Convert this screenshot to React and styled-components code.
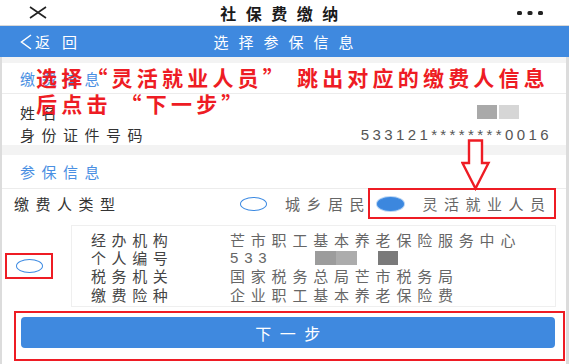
import React from "react";
import styled, { createGlobalStyle } from "styled-components";

const BLUE = "#3f89df";
const RED = "#ee1c24";

const GlobalStyle = createGlobalStyle`
  html, body {
    margin: 0;
    padding: 0;
    background: #fff;
  }
  body {
    font-family: "Liberation Sans", "Noto Sans CJK SC", sans-serif;
  }
  * {
    box-sizing: border-box;
  }
`;

const payer = {
  idNumber: "533121********0016",
};

const details = [
  { label: "经办机构", value: "芒市职工基本养老保险服务中心" },
  { label: "个人编号", value: "533", masked: true },
  { label: "税务机关", value: "国家税务总局芒市税务局" },
  { label: "缴费险种", value: "企业职工基本养老保险费" },
];

const App = () => (
  <Page>
    <GlobalStyle />
    <TopBar>
      <svg width="18" height="13" viewBox="0 0 18 13">
        <path d="M1 1 L17 12 M17 1 L1 12" stroke="#222" strokeWidth="1.6" fill="none" />
      </svg>
      <TopTitle>社保费缴纳</TopTitle>
      <svg width="26" height="4" viewBox="0 0 26 4">
        <rect x="0" y="0" width="5" height="4" rx="1.5" fill="#222" />
        <rect x="10.5" y="0" width="5" height="4" rx="1.5" fill="#222" />
        <rect x="21" y="0" width="5" height="4" rx="1.5" fill="#222" />
      </svg>
    </TopBar>
    <NavBar>
      <BackLink>
        <svg width="12" height="16" viewBox="0 0 12 16">
          <path d="M11 1 L1.5 8 L11 15" stroke="#fff" strokeWidth="1.5" fill="none" />
        </svg>
        返回
      </BackLink>
      <NavTitle>选择参保信息</NavTitle>
      <span />
    </NavBar>

    <Body>
      <Section>
        <SectionHeader>缴费信息</SectionHeader>
        <InfoRows>
          <InfoRow>
            <Label>姓名</Label>
            <Masked>
              <MaskBlock tone="#a9a9a9" />
              <MaskBlock tone="#d6d6d6" />
            </Masked>
          </InfoRow>
          <InfoRow>
            <Label>身份证件号码</Label>
            <Number>{payer.idNumber}</Number>
          </InfoRow>
        </InfoRows>
      </Section>

      <Section grow>
        <SectionHeader tall>参保信息</SectionHeader>
        <TypeRow>
          <Label>缴费人类型</Label>
          <Option>
            <Radio />
            <OptionText>城乡居民</OptionText>
          </Option>
          <Option highlighted>
            <Radio checked />
            <OptionText>灵活就业人员</OptionText>
          </Option>
        </TypeRow>

        <RecordRow>
          <RecordPick>
            <PickFrame>
              <Radio />
            </PickFrame>
          </RecordPick>
          <RecordCard>
            {details.map(item => (
              <RecordLine key={item.label}>
                <RecordLabel>{item.label}</RecordLabel>
                <RecordValue>
                  {item.value}
                  {item.masked && (
                    <>
                      <MaskBlock tone="#9c9c9c" wide offset={43} />
                      <MaskBlock tone="#acacac" wide />
                      <MaskBlock tone="#7a7a7a" offset={21} />
                    </>
                  )}
                </RecordValue>
              </RecordLine>
            ))}
          </RecordCard>
        </RecordRow>

        <ButtonFrame>
          <NextButton>下一步</NextButton>
        </ButtonFrame>
      </Section>
    </Body>

    <Note>
      <div>选择“灵活就业人员” 跳出对应的缴费人信息</div>
      <div>后点击 “下一步”</div>
    </Note>
    <Arrow width="30" height="52" viewBox="0 0 30 52">
      <path
        d="M8 1.5 L21 1.5 L21 24 L27.5 24 L14.5 49.5 L1.5 24 L8 24 Z"
        stroke={RED}
        strokeWidth="2.4"
        fill="#fff"
        strokeLinejoin="miter"
      />
    </Arrow>
  </Page>
);

const Page = styled.div`
  position: relative;
  width: 569px;
  height: 364px;
  overflow: hidden;
  display: flex;
  flex-direction: column;
  background: #f3f3f3;
`;

const TopBar = styled.div`
  height: 26px;
  flex-shrink: 0;
  display: flex;
  align-items: center;
  justify-content: space-between;
  padding: 0 26px 0 29px;
  background: #fff;
  border-bottom: 1px solid #d8d8d8;
`;

const TopTitle = styled.div`
  font-family: "Noto Sans CJK SC", sans-serif;
  font-size: 16px;
  font-weight: 700;
  letter-spacing: 9.5px;
  color: #1a1a1a;
  margin-left: 4px;
`;

const NavBar = styled.div`
  height: 31px;
  flex-shrink: 0;
  display: grid;
  grid-template-columns: 1fr auto 1fr;
  align-items: center;
  padding: 0 20px;
  background: ${BLUE};
  color: #fff;
`;

const BackLink = styled.div`
  display: flex;
  align-items: center;
  gap: 3px;
  font-family: "Noto Sans CJK SC", sans-serif;
  font-size: 15px;
  letter-spacing: 12px;
`;

const NavTitle = styled.div`
  font-family: "Noto Sans CJK SC", sans-serif;
  font-size: 15px;
  letter-spacing: 10px;
  margin-left: 8px;
`;

const Body = styled.div`
  flex: 1;
  display: flex;
  flex-direction: column;
  gap: 10px;
  padding-top: 6px;
  border-left: 2px solid #dcdcdc;
  border-right: 3px solid #dcdcdc;
`;

const Section = styled.div`
  background: #fff;
  display: flex;
  flex-direction: column;
  flex: ${props => (props.grow ? 1 : "none")};
`;

const SectionHeader = styled.div`
  height: ${props => (props.tall ? "34px" : "31px")};
  display: flex;
  align-items: center;
  padding-left: 18px;
  border-bottom: 1px solid #ececec;
  font-family: "Noto Sans CJK SC", sans-serif;
  font-size: 15px;
  letter-spacing: 6.5px;
  color: #4a8fe2;
`;

const InfoRows = styled.div`
  padding: 7px 0 0 18px;
`;

const InfoRow = styled.div`
  height: 22px;
  display: flex;
  align-items: center;
  justify-content: space-between;
  padding-right: 17px;
`;

const Label = styled.div`
  font-family: "Noto Sans CJK SC", sans-serif;
  font-size: 15px;
  letter-spacing: 6.5px;
  color: #333;
  flex: 1;
`;

const Masked = styled.div`
  display: flex;
  gap: 2px;
  margin-right: 30px;
`;

const MaskBlock = styled.span`
  display: inline-block;
  vertical-align: middle;
  width: ${props => (props.wide ? "21px" : "20px")};
  height: 14px;
  margin-left: ${props => (props.offset ? `${props.offset}px` : "0")};
  background: ${props => props.tone};
`;

const Number = styled.div`
  font-size: 15px;
  letter-spacing: 3.4px;
  color: #555;
  margin-right: -3px;
`;

const TypeRow = styled.div`
  height: 31px;
  margin-top: -1px;
  display: flex;
  align-items: center;
  padding: 0 10px 0 12px;
`;

const Option = styled.div`
  height: 31px;
  display: flex;
  align-items: center;
  gap: 18px;
  padding: ${props => (props.highlighted ? "0 9px 0 7px" : "0 4px 0 0")};
  border: ${props => (props.highlighted ? `2px solid ${RED}` : "none")};
`;

const OptionText = styled.span`
  font-family: "Noto Sans CJK SC", sans-serif;
  font-size: 15px;
  letter-spacing: 6.5px;
  margin-right: -6.5px;
  color: #666;
`;

const Radio = styled.span`
  display: inline-block;
  width: 27px;
  height: 14px;
  border-radius: 50%;
  border: 1.5px solid #3c8ae2;
  background: ${props => (props.checked ? "#3c87de" : "transparent")};
  box-shadow: ${props => (props.checked ? "0 0 0 1px #b9d4f3" : "none")};
`;

const RecordRow = styled.div`
  display: flex;
  align-items: center;
  margin-top: 6px;
  padding-right: 10px;
`;

const RecordPick = styled.div`
  width: 69px;
  flex-shrink: 0;
  padding-left: 3px;
`;

const PickFrame = styled.div`
  width: 48px;
  height: 26px;
  display: flex;
  align-items: center;
  justify-content: center;
  border: 2.5px solid ${RED};
`;

const RecordCard = styled.div`
  flex: 1;
  height: 82px;
  padding: 4px 0 4px 19px;
  border: 1px solid #efefef;
`;

const RecordLine = styled.div`
  height: 18.4px;
  display: flex;
  align-items: center;
`;

const RecordLabel = styled.div`
  width: 139px;
  flex-shrink: 0;
  font-family: "Noto Sans CJK SC", sans-serif;
  font-size: 15px;
  letter-spacing: 5.6px;
  color: #444;
`;

const RecordValue = styled.div`
  display: flex;
  align-items: center;
  font-family: "Liberation Sans", "Noto Sans CJK SC", sans-serif;
  font-size: 15px;
  letter-spacing: 5.8px;
  color: #666;
  white-space: nowrap;
`;

const ButtonFrame = styled.div`
  margin: 4px 1px 2px 12px;
  height: 50px;
  padding: 4px 8px 0 5px;
  border: 2px solid ${RED};
`;

const NextButton = styled.div`
  height: 31px;
  border-radius: 4px;
  background: ${BLUE};
  color: #fff;
  display: flex;
  align-items: center;
  justify-content: center;
  font-family: "Noto Sans CJK SC", sans-serif;
  font-size: 16px;
  letter-spacing: 8.5px;
  padding-left: 8px;
`;

const Note = styled.div`
  position: absolute;
  left: 36px;
  top: 64px;
  font-family: "Noto Sans CJK SC", sans-serif;
  font-size: 21px;
  font-weight: 700;
  line-height: 26px;
  letter-spacing: 4.2px;
  color: ${RED};
  white-space: nowrap;
`;

const Arrow = styled.svg`
  position: absolute;
  left: 461px;
  top: 139px;
`;

export default App;
